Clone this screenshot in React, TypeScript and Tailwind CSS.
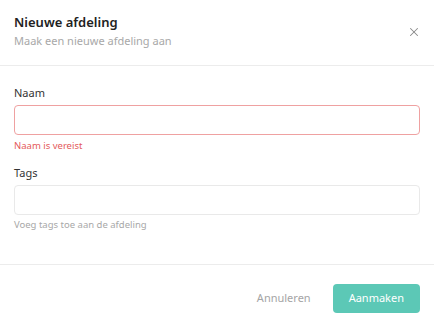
import { X } from "lucide-react";

const App = () => {
  return (
    <div className="w-[434px] h-[328px] bg-white flex flex-col font-['Noto_Sans',sans-serif] overflow-hidden">
      <header className="flex items-center justify-between pl-[14px] pr-[13px] pt-[13px] pb-[16px] border-b border-[#ececec]">
        <div>
          <h1 className="text-[13px] leading-[18px] font-semibold text-[#222]">Nieuwe afdeling</h1>
          <p className="mt-[2px] text-[11px] leading-[16px] text-[#a8a8a8]">Maak een nieuwe afdeling aan</p>
        </div>
        <button className="mt-[1px] text-[#8a8a8a]" aria-label="Sluiten">
          <X size={14} strokeWidth={1.8} />
        </button>
      </header>

      <div className="flex-1 px-[14px] pt-[19px]">
        <label className="block text-[11px] leading-[16px] text-[#333]">Naam</label>
        <input className="mt-[4px] block w-full h-[30px] rounded-[4px] border border-[#efa1a1] px-2 text-[11px] outline-none" />
        <p className="mt-[4px] text-[9.5px] leading-[14px] text-[#e45a5a]">Naam is vereist</p>

        <label className="mt-[12px] block text-[11px] leading-[16px] text-[#333]">Tags</label>
        <input className="mt-[4px] block w-full h-[30px] rounded-[4px] border border-[#e9e9e9] px-2 text-[11px] outline-none" />
        <p className="mt-[3px] text-[9.5px] leading-[14px] text-[#a8a8a8]">Voeg tags toe aan de afdeling</p>
      </div>

      <footer className="h-[64px] border-t border-[#ececec] flex items-start justify-end gap-[6px] px-[14px] pt-[19px]">
        <button className="h-[29px] px-[16px] text-[11px] text-[#a5a5a5]">Annuleren</button>
        <button className="h-[29px] px-[16px] rounded-[4px] bg-[#5cc8b6] text-[11px] text-white">Aanmaken</button>
      </footer>
    </div>
  );
};

export default App;
